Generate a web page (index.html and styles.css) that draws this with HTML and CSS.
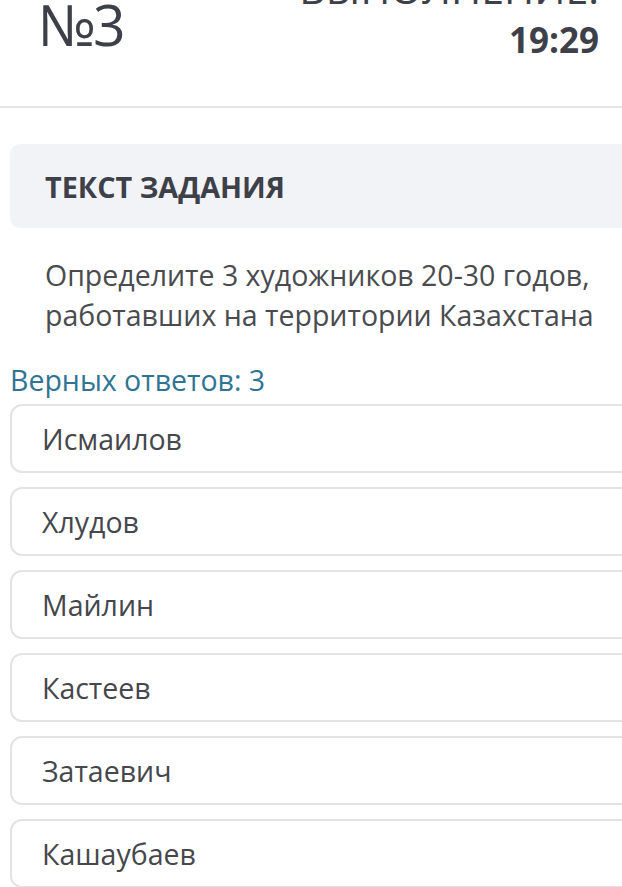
FILE: index.html
```html
<!DOCTYPE html>
<html lang="ru">
<head>
<meta charset="utf-8">
<link rel="stylesheet" href="styles.css">
</head>
<body>
<div class="page">
  <header class="header">
    <div class="num">№3</div>
    <div class="timer">
      <div class="timer-label">ВЫПОЛНЕНИЕ:</div>
      <div class="timer-value">19:29</div>
    </div>
  </header>
  <section class="task">
    <div class="task-title">ТЕКСТ ЗАДАНИЯ</div>
    <p class="task-text">Определите 3 художников 20-30 годов, работавших на территории Казахстана</p>
  </section>
  <div class="answers-count">Верных ответов: 3</div>
  <ul class="options">
    <li class="option">Исмаилов</li>
    <li class="option">Хлудов</li>
    <li class="option">Майлин</li>
    <li class="option">Кастеев</li>
    <li class="option">Затаевич</li>
    <li class="option">Кашаубаев</li>
  </ul>
</div>
</body>
</html>
```
FILE: styles.css
```css
html, body {
  margin: 0;
  padding: 0;
  background: #fff;
  overflow: hidden;
}
body {
  font-family: "Open Sans", "Liberation Sans", sans-serif;
  color: #3f4249;
}
.page {
  width: 680px;
}
.header {
  display: flex;
  justify-content: space-between;
  align-items: flex-start;
  box-sizing: border-box;
  width: 622px;
  height: 108px;
  padding: 0 23px 0 38px;
  border-bottom: 2px solid #e6e6e6;
}
.num {
  font-weight: 400;
  font-size: 57px;
  line-height: 58px;
  margin-top: -5px;
  color: #3d4049;
  letter-spacing: -3px;
}
.timer {
  display: flex;
  flex-direction: column;
  align-items: flex-end;
}
.timer-label {
  font-size: 41px;
  line-height: 44px;
  margin-top: -34px;
  color: #3d4049;
  white-space: nowrap;
}
.timer-value {
  font-weight: 700;
  font-size: 35px;
  line-height: 40px;
  margin-top: 10px;
  color: #3d4049;
}
.task {
  margin: 36px 0 0 10px;
}
.task-title {
  background: #f2f3f6;
  border-radius: 10px;
  height: 84px;
  box-sizing: border-box;
  padding: 0 0 0 35px;
  display: flex;
  align-items: center;
  font-weight: 700;
  font-size: 28.8px;
  color: #3d4049;
}
.task-text {
  margin: 27px 0 0 35px;
  width: 580px;
  font-size: 28.5px;
  line-height: 40px;
  color: #4a4b4f;
}
.answers-count {
  margin: 28px 0 0 10px;
  font-size: 28.5px;
  line-height: 34px;
  color: #2f7493;
}
.options {
  list-style: none;
  margin: 7px 0 0 10px;
  padding: 0;
  display: flex;
  flex-direction: column;
  gap: 14px;
}
.option {
  box-sizing: border-box;
  height: 69px;
  border: 2px solid #e3e3e3;
  border-radius: 12px;
  padding: 0 0 0 30px;
  display: flex;
  align-items: center;
  font-size: 28.5px;
  color: #45474c;
}
```
